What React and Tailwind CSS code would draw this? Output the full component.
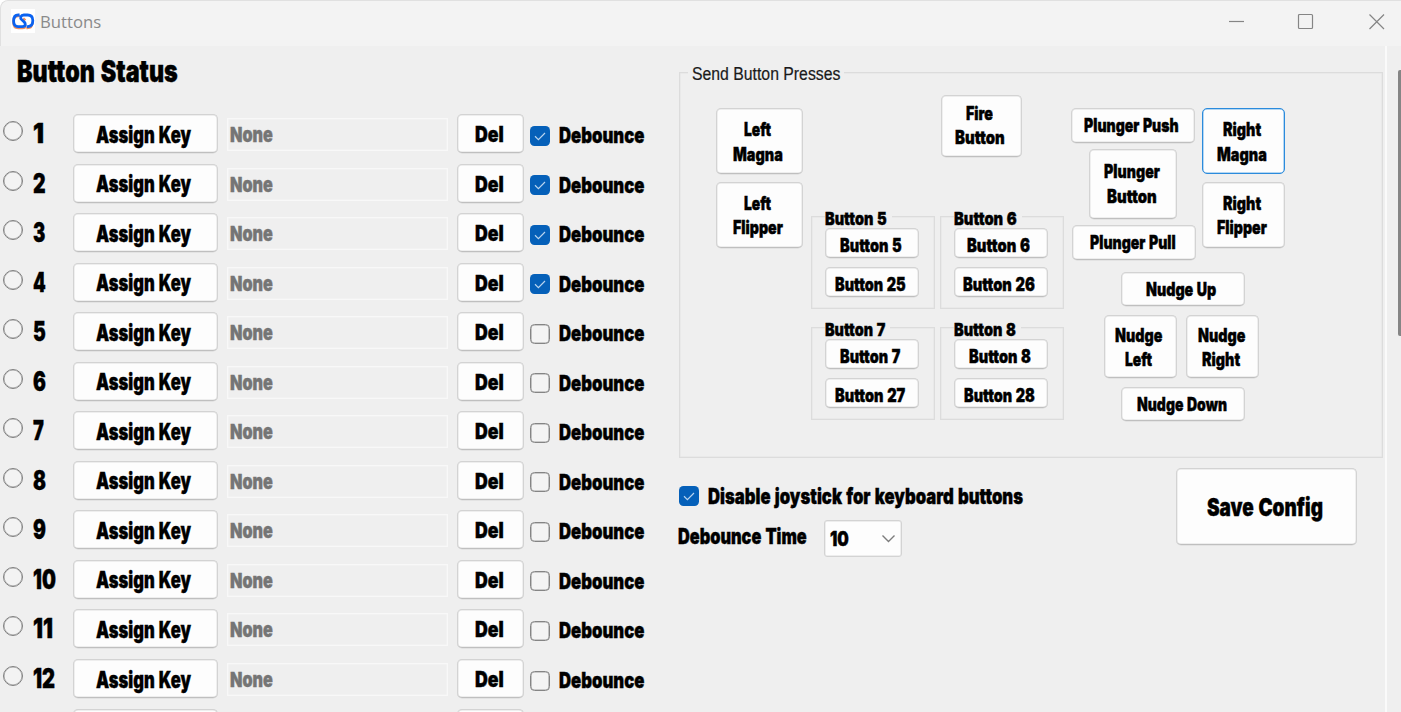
import { useLayoutEffect, useRef, useState } from "react";

const FACE = "font-['Inter',sans-serif] font-black [word-spacing:0.05em]";
const DISPLAY = `${FACE} text-black [-webkit-text-stroke:0.4px_#000]`;
const EDGE = "border border-[#dcdcdc] shadow-[inset_0_0_0_0.5px_#e4e4e4]";

/* Condenses a line of text so that it occupies exactly `w` pixels. */
function Fit({ w, className = "", children }) {
  const ref = useRef(null);
  const [k, setK] = useState(1);
  useLayoutEffect(() => {
    setK(w / ref.current.offsetWidth);
  }, [w]);
  return (
    <span className={`block shrink-0 ${className}`} style={{ width: w }}>
      <span
        ref={ref}
        className="inline-block origin-left whitespace-nowrap align-top"
        style={{ transform: `scaleX(${k})` }}
      >
        {children}
      </span>
    </span>
  );
}

function Btn({ lines = [], className = "", text = "text-[18.5px] leading-[24.2px]", active }) {
  return (
    <button
      className={`flex shrink-0 flex-col items-center justify-center rounded-[5px] border bg-[#fdfdfd] ${
        active
          ? "border-[#2b8bdc] shadow-[inset_0_0_0_0.5px_#6fb1e8]"
          : "border-[#d3d3d3] border-b-[#bfbfbf] shadow-[inset_0_0_0_0.5px_#e0e0e0,0_0.5px_0_#d8d8d8]"
      } ${DISPLAY} ${text} ${className}`}
    >
      {lines.map(([t, w]) => (
        <Fit key={t} w={w}>{t}</Fit>
      ))}
    </button>
  );
}

function Check({ on, className = "" }) {
  return on ? (
    <span className={`flex size-5 shrink-0 items-center justify-center rounded-[4.5px] bg-[#0560b9] ${className}`}>
      <svg width="20" height="20" viewBox="0 0 20 20" fill="none" stroke="#b9d4ef" strokeWidth="1.2">
        <path d="M5 10.3 L8.4 13.6 L15 7" />
      </svg>
    </span>
  ) : (
    <span className={`size-5 shrink-0 rounded-[4.5px] border border-[#858585] bg-[#f4f4f4] shadow-[inset_0_0_0_0.6px_#a0a0a0] ${className}`} />
  );
}

const NUM_W = [11, 12.5, 12.5, 13, 13, 13, 11, 13, 13, 23, 20, 22];

function Row({ i }) {
  return (
    <div className="flex h-[49.55px] shrink-0 items-start">
      <span className="mt-[7px] ml-[3px] size-5 shrink-0 rounded-full border border-[#808080] bg-[#f3f3f3] shadow-[inset_0_0_0_0.5px_#a0a0a0]" />
      <div className={`ml-[10px] w-[40px] shrink-0 text-[26.5px] leading-[38px] ${DISPLAY}`}>
        <Fit w={NUM_W[i]}>{i + 1}</Fit>
      </div>
      <Btn
        lines={[["Assign Key", 95]]}
        text="text-[22.5px] leading-[28px]"
        className="h-[39px] w-[145px] pt-[2px] pr-[5px]"
      />
      <div className={`mt-[4px] ml-[9px] flex h-[33px] w-[221px] shrink-0 items-center border border-[#f8f8f8] pt-[1px] pl-[2px] text-[20.5px] leading-[28px] text-[#757575] shadow-[inset_0_0_0_0.5px_#f6f6f6] [-webkit-text-stroke:0.4px_#757575] ${FACE}`}>
        <Fit w={42.5}>None</Fit>
      </div>
      <Btn
        lines={[["Del", 29]]}
        text="text-[22px] leading-[28px]"
        className="ml-[9px] h-[39px] w-[67px] pt-[1px] pr-[3px]"
      />
      <Check on={i < 4} className="mt-[11.5px] ml-[6px]" />
      <div className={`mt-[7px] ml-[9px] text-[21.5px] leading-[28px] ${DISPLAY}`}>
        <Fit w={85.5}>Debounce</Fit>
      </div>
    </div>
  );
}

function Group({ n, tw, w1, w2, p1 }) {
  return (
    <div className={`h-[93px] w-[124px] pl-[12.5px] ${EDGE}`}>
      <div className={`-mt-[10px] w-fit bg-[#efefef] pr-[5px] text-[18px] leading-[24px] ${DISPLAY}`}>
        <Fit w={tw}>Button {n}</Fit>
      </div>
      <Btn lines={[[`Button ${n}`, w1]]} className={`-mt-[3px] h-[30px] w-[94px] pt-[4px] ${p1}`} />
      <Btn lines={[[`Button ${n + 20}`, w2]]} className="mt-[9px] h-[30px] w-[94px] pt-[4px] pr-[3px]" />
    </div>
  );
}

export default function App() {
  return (
    <div className="flex h-screen flex-col overflow-hidden rounded-tl-lg bg-[#efefef]">
      <header className="flex h-[46px] shrink-0 items-start rounded-tl-lg border-t border-l border-[#e0e0e0] bg-[#f3f3f3]">
        <span className="mt-[8px] ml-[10px] flex size-6 items-center justify-center bg-white">
          <svg width="24" height="24" viewBox="0 0 24 24" fill="none">
            <g stroke="#f0905f" strokeWidth="2.4" transform="translate(-0.2 1.3)">
              <path d="M9 5.8 H7.4 Q2.6 5.8 2.6 12 Q2.6 17.8 7.4 17.8 H11.6 Q14.6 17.8 14.6 15.4" />
              <path d="M12.4 8 L14.6 10 M15.6 17.8 H16.4 Q21.6 17.8 21.6 12" />
            </g>
            <g stroke="#0b62f0" strokeWidth="2.8">
              <path d="M8.6 6 H7.2 Q2.6 6 2.6 12 Q2.6 17.6 7.2 17.6 H11.2 Q14.3 17.6 14.3 15.2 Q14.3 13.6 12.6 12.3 L10.8 10.8 Q9.2 9.4 9.8 7.7 Q10.6 6 12.8 6 H16.6 Q21.8 6 21.8 11.6 Q21.8 17.6 16.8 17.6 H15.8" />
            </g>
          </svg>
        </span>
        <div className="mt-[8.5px] ml-[5px] font-['Open_Sans',sans-serif] text-[17px] leading-[24px] text-[#8a8a8a]">
          <Fit w={61}>Buttons</Fit>
        </div>
        <svg className="mt-[12px] mr-[15.5px] ml-auto" width="158" height="18" viewBox="0 0 158 18" fill="none" stroke="#858585" strokeWidth="1.2">
          <path d="M1 8.5 H16" />
          <rect x="70.5" y="1.5" width="14" height="14" rx="1" />
          <path d="M141.5 1.5 L156 16 M156 1.5 L141.5 16" />
        </svg>
      </header>

      <div className="flex min-h-0 flex-1">
        <section className="flex w-[679px] shrink-0 flex-col">
          <h1 className={`mt-[6px] mb-[26px] ml-[17px] h-[36px] text-[30px] leading-[38px] ${DISPLAY}`}>
            <Fit w={161}>Button Status</Fit>
          </h1>
          {NUM_W.map((_, i) => (
            <Row key={i} i={i} />
          ))}
          <div className="flex shrink-0 items-start pl-[73px]">
            <Btn className="h-[39px] w-[145px]" />
            <Btn className="ml-[239px] h-[39px] w-[67px]" />
          </div>
        </section>

        <section className="w-[704px] shrink-0 pt-[26px]">
          <div className={`h-[386px] ${EDGE}`}>
            <div className="-mt-[10.5px] ml-[8px] h-[21.5px] w-fit bg-[#efefef] px-[4px] font-['Liberation_Sans',sans-serif] text-[17.5px] leading-[22px] text-[#1a1a1a] [-webkit-text-stroke:0.2px_#1a1a1a]">
              <Fit w={148}>Send Button Presses</Fit>
            </div>
            <div className="flex items-start pt-[11px] pl-[36px]">
              <div className="mt-[13px] flex flex-col gap-[8px]">
                <Btn lines={[["Left", 27], ["Magna", 50]]} className="h-[66px] w-[87px] pt-[1px] pr-[4px]" />
                <Btn lines={[["Left", 27], ["Flipper", 50]]} className="h-[66px] w-[87px] pr-[4px]" />
              </div>

              <div className="ml-[8px] flex flex-col">
                <Btn lines={[["Fire", 27], ["Button", 50]]} className="ml-[130px] h-[61.5px] w-[81px] pr-[4px] pb-[1px]" />
                <div className="mt-[59.5px] grid grid-cols-[124px_124px] gap-x-[5px] gap-y-[18px]">
                  <Group n={5} tw={62} w1={62} w2={71} p1="pr-[2px]" />
                  <Group n={6} tw={63} w1={63} w2={72} p1="pr-[5px]" />
                  <Group n={7} tw={60} w1={60} w2={70} p1="pr-[4px]" />
                  <Group n={8} tw={62} w1={62} w2={71} p1="pr-[2px]" />
                </div>
              </div>

              <div className="mt-[13px] ml-[6.5px] flex flex-col">
                <div className="flex">
                  <div className="flex w-[131.5px] flex-col">
                    <Btn lines={[["Plunger Push", 95]]} className="h-[34.5px] w-[124px] pr-[2px]" />
                    <Btn lines={[["Plunger", 56], ["Button", 50]]} className="mt-[6.5px] ml-[18px] h-[70px] w-[88px] pr-[2px] pb-[1px]" />
                    <Btn lines={[["Plunger Pull", 86]]} className="mt-[6px] ml-[1.5px] h-[34.5px] w-[124px] pr-[2px]" />
                  </div>
                  <div className="flex flex-col gap-[8px]">
                    <Btn active lines={[["Right", 38], ["Magna", 50]]} className="h-[66px] w-[82.5px] pt-[1px] pr-[3px]" />
                    <Btn lines={[["Right", 38], ["Flipper", 50]]} className="h-[66px] w-[82.5px] pr-[3px]" />
                  </div>
                </div>
                <div className="mt-[12.5px] flex w-[225px] flex-col items-center">
                  <Btn lines={[["Nudge Up", 70]]} className="h-[34px] w-[124px] pr-[4px]" />
                  <div className="mt-[9px] flex gap-[9.5px] self-start pl-[33px]">
                    <Btn lines={[["Nudge", 47], ["Left", 27]]} className="h-[63px] w-[73px] pt-[1px] pr-[3px]" />
                    <Btn lines={[["Nudge", 47], ["Right", 38]]} className="h-[63px] w-[73px] pt-[1px] pr-[3px]" />
                  </div>
                  <Btn lines={[["Nudge Down", 90]]} className="mt-[9px] h-[34px] w-[124px] pr-[3px]" />
                </div>
              </div>
            </div>
          </div>

          <div className="flex items-start">
            <div className="w-[497px] pt-[24px]">
              <div className={`flex items-start text-[21.5px] leading-[28px] ${DISPLAY}`}>
                <Check on className="mt-[4px]" />
                <Fit w={315} className="ml-[8.5px]">Disable joystick for keyboard buttons</Fit>
              </div>
              <div className={`mt-[8.5px] flex items-start text-[21.5px] leading-[35px] ${DISPLAY}`}>
                <Fit w={129} className="-ml-[1.5px]">Debounce Time</Fit>
                <div className="mt-[1px] ml-[17.5px] flex h-[37.5px] w-[78px] items-center justify-between rounded-[3px] border border-[#d3d3d3] bg-[#fdfdfd] pt-[2px] pr-[5px] pl-[5px] text-[20.5px] leading-[28px] shadow-[inset_0_0_0_0.5px_#dedede]">
                  <Fit w={19}>10</Fit>
                  <svg width="15" height="10" viewBox="0 0 15 10" fill="none" stroke="#7c7c7c" strokeWidth="1.4">
                    <path d="M1.5 1.5 L7.5 7.5 L13.5 1.5" />
                  </svg>
                </div>
              </div>
            </div>
            <Btn
              lines={[["Save Config", 116]]}
              text="text-[24.5px] leading-[30px]"
              className="mt-[10px] h-[77px] w-[181px] pr-[3px]"
            />
          </div>
        </section>

        <div className="ml-[2px] w-[2px] shrink-0 bg-[#fafafa]" />
        <div className="mt-[24px] ml-auto h-[266px] w-[3.5px] shrink-0 rounded-l-[2px] bg-[#858585]" />
      </div>
    </div>
  );
}
